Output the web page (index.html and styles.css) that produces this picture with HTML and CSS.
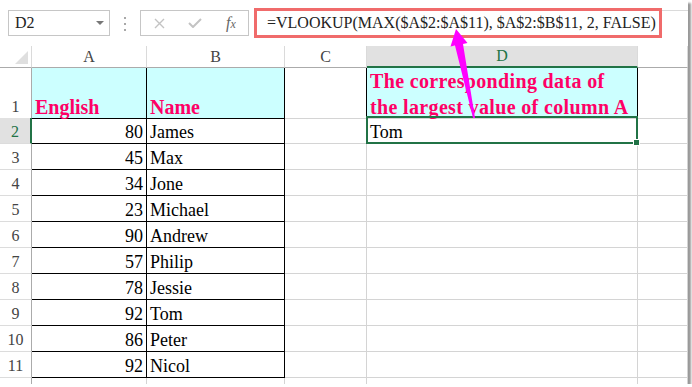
FILE: index.html
```html
<!DOCTYPE html>
<html lang="en">
<head>
    <meta charset="UTF-8">
    <title>VLOOKUP with MAX</title>
    <link rel="stylesheet" href="styles.css">
</head>
<body>
    <div class="sheet">
        <div class="toolbar">
            <div class="name-box">
                <span>D2</span>
                <span class="caret"></span>
            </div>
            <div class="grip"><i></i><i></i><i></i></div>
            <div class="fx-box">
                <svg class="ico-x" width="11" height="11" viewBox="0 0 11 11"><path d="M1 1 L10 10 M10 1 L1 10" stroke="#c3c3c3" stroke-width="1.4" fill="none"/></svg>
                <svg class="ico-ok" width="14" height="10" viewBox="0 0 14 10"><path d="M1 5 L5 9 L13 1" stroke="#c3c3c3" stroke-width="2" fill="none"/></svg>
                <span class="fx"><i>f</i><i class="sub">x</i></span>
            </div>
            <div class="formula-line">
                <div class="formula">=VLOOKUP(MAX($A$2:$A$11), $A$2:$B$11, 2, FALSE)</div>
            </div>
        </div>

        <div class="grid">
            <div class="row head">
                <div class="corner"><span></span></div>
                <div>A</div>
                <div>B</div>
                <div>C</div>
                <div class="on">D</div>
                <div></div>
            </div>
            <div class="row row-1">
                <div class="num">1</div>
                <div class="cell box fill title">English</div>
                <div class="cell box fill title">Name</div>
                <div class="cell edge"></div>
                <div class="cell edge fill title-d"><span>The corresponding data of<br>the largest value of column A</span></div>
                <div class="cell"></div>
            </div>
            <div class="row">
                <div class="num on">2</div>
                <div class="cell box right">80</div>
                <div class="cell box">James</div>
                <div class="cell"></div>
                <div class="cell sel">Tom</div>
                <div class="cell"></div>
            </div>
            <div class="row">
                <div class="num">3</div>
                <div class="cell box right">45</div>
                <div class="cell box">Max</div>
                <div class="cell"></div><div class="cell"></div><div class="cell"></div>
            </div>
            <div class="row">
                <div class="num">4</div>
                <div class="cell box right">34</div>
                <div class="cell box">Jone</div>
                <div class="cell"></div><div class="cell"></div><div class="cell"></div>
            </div>
            <div class="row">
                <div class="num">5</div>
                <div class="cell box right">23</div>
                <div class="cell box">Michael</div>
                <div class="cell"></div><div class="cell"></div><div class="cell"></div>
            </div>
            <div class="row">
                <div class="num">6</div>
                <div class="cell box right">90</div>
                <div class="cell box">Andrew</div>
                <div class="cell"></div><div class="cell"></div><div class="cell"></div>
            </div>
            <div class="row">
                <div class="num">7</div>
                <div class="cell box right">57</div>
                <div class="cell box">Philip</div>
                <div class="cell"></div><div class="cell"></div><div class="cell"></div>
            </div>
            <div class="row">
                <div class="num">8</div>
                <div class="cell box right">78</div>
                <div class="cell box">Jessie</div>
                <div class="cell"></div><div class="cell"></div><div class="cell"></div>
            </div>
            <div class="row">
                <div class="num">9</div>
                <div class="cell box right">92</div>
                <div class="cell box">Tom</div>
                <div class="cell"></div><div class="cell"></div><div class="cell"></div>
            </div>
            <div class="row">
                <div class="num">10</div>
                <div class="cell box right">86</div>
                <div class="cell box">Peter</div>
                <div class="cell"></div><div class="cell"></div><div class="cell"></div>
            </div>
            <div class="row">
                <div class="num">11</div>
                <div class="cell box right">92</div>
                <div class="cell box">Nicol</div>
                <div class="cell"></div><div class="cell"></div><div class="cell"></div>
            </div>
            <div class="row">
                <div class="num">12</div>
                <div class="cell"></div><div class="cell"></div><div class="cell"></div><div class="cell"></div><div class="cell"></div>
            </div>
        </div>

        <!-- callout arrow from D1 up to the MAX range -->
        <svg class="arrow" width="688" height="384" viewBox="0 0 688 384">
            <polygon points="456,29 467.5,43 463,44 475,118 473,118 455,45.5 450.5,46.5" fill="#ff00ff"/>
        </svg>
    </div>
</body>
</html>
```

FILE: styles.css
```css
body {
    margin: 0;
    background: #fff;
}
.sheet {
    position: relative;
    width: 688px;
    height: 384px;
    overflow: hidden;
    background: #fff;
    box-shadow: 3px 3px 2px #999;
    font-family: "Liberation Serif", "Times New Roman", serif;
    color: #000;
}

/* formula bar */
.toolbar {
    display: flex;
    align-items: flex-start;
    height: 46px;
    padding-left: 8px;
    box-sizing: border-box;
}
.name-box {
    margin-top: 10px;
    width: 102px;
    height: 26px;
    box-sizing: border-box;
    border: 1px solid #c6c6c6;
    display: flex;
    align-items: center;
    justify-content: space-between;
    padding: 0 5px 0 6px;
    font-size: 16px;
    color: #222;
}
.caret {
    width: 0;
    height: 0;
    border-left: 4px solid transparent;
    border-right: 4px solid transparent;
    border-top: 4px solid #777;
}
.grip {
    width: 30px;
    margin-top: 17px;
    display: flex;
    flex-direction: column;
    align-items: center;
    gap: 4px;
}
.grip i {
    width: 2px;
    height: 2px;
    background: #a8a8a8;
}
.fx-box {
    margin-top: 10px;
    width: 109px;
    height: 26px;
    box-sizing: border-box;
    border: 1px solid #c6c6c6;
    display: flex;
    align-items: center;
    padding-left: 13px;
}
.ico-ok {
    margin-left: 23px;
}
.fx {
    margin-left: 24px;
    font-size: 16px;
    color: #666;
}
.fx .sub {
    font-size: 12px;
}
.formula-line {
    flex: 1;
    margin-left: 5px;
    margin-top: 10px;
    border-top: 1px solid #dadada;
}
.formula {
    margin-top: -3px;
    width: 408px;
    height: 30px;
    box-sizing: border-box;
    border: 3px solid #f06b6b;
    padding-left: 10px;
    font-size: 16px;
    line-height: 24px;
    color: #222;
    white-space: nowrap;
}

/* grid */
.row {
    display: grid;
    grid-template-columns: 32px 115px 138px 82px 271px 50px;
    height: 26px;
}
.row > div {
    box-sizing: border-box;
    border-right: 1px solid #d4d4d4;
    border-bottom: 1px solid #d4d4d4;
    display: flex;
    align-items: flex-end;
    padding: 0 3px 1px;
    font-size: 18px;
    line-height: 20px;
    white-space: nowrap;
}
.head {
    height: 22px;
}
.head > div {
    align-items: center;
    justify-content: center;
    padding: 0;
    font-size: 16px;
    line-height: 18px;
    color: #444;
    border-right-color: #dadada;
    border-bottom-color: #ababab;
}
.head > .on {
    background: #e1e1e1;
    color: #217346;
    border-bottom: 2px solid #217346;
}
.corner {
    position: relative;
}
.corner span {
    position: absolute;
    right: 3px;
    bottom: 3px;
    width: 0;
    height: 0;
    border-left: 13px solid transparent;
    border-bottom: 13px solid #dfdfdf;
}
.row > .num {
    justify-content: center;
    padding: 0 0 1px;
    font-size: 16px;
    color: #444;
    border-right-color: #ababab;
    border-bottom-color: #dcdcdc;
}
.row > .num.on {
    background: #e1e1e1;
    color: #217346;
    border-right: 2px solid #217346;
}
.row-1 {
    height: 50px;
}
.row > .box {
    border-right-color: #000;
    border-bottom-color: #000;
}
.row > .edge {
    border-right-color: #000;
}
.right {
    justify-content: flex-end;
}
.fill {
    background: #ccffff;
}
.row > .title {
    color: #ff0066;
    font-weight: bold;
    font-size: 20px;
    line-height: 22px;
    padding-bottom: 0;
}
.row > .title-d {
    color: #ff0066;
    font-weight: bold;
    font-size: 20px;
    line-height: 26px;
    letter-spacing: 0.35px;
    padding-bottom: 0;
}
.title-d span {
    margin-bottom: -2px;
}

/* active cell */
.sel {
    position: relative;
}
.sel::after {
    content: "";
    position: absolute;
    left: -1px;
    top: -2px;
    right: -1px;
    bottom: -1px;
    border: 2px solid #217346;
}
.sel::before {
    content: "";
    position: absolute;
    right: -3px;
    bottom: -3px;
    width: 5px;
    height: 5px;
    background: #217346;
    border: 1px solid #fff;
    z-index: 1;
}
.arrow {
    position: absolute;
    left: 0;
    top: 0;
    pointer-events: none;
}
```
